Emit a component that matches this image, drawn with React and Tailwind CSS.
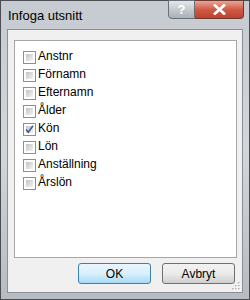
const items = [
  { label: 'Anstnr', checked: false },
  { label: 'Förnamn', checked: false },
  { label: 'Efternamn', checked: false },
  { label: 'Ålder', checked: false },
  { label: 'Kön', checked: true },
  { label: 'Lön', checked: false },
  { label: 'Anställning', checked: false },
  { label: 'Årslön', checked: false },
]

function CheckBox({ checked }) {
  return (
    <div className="w-[13px] h-[13px] border border-[#8e8f8f] bg-white p-[2px] shrink-0">
      <div className="w-full h-full bg-gradient-to-br from-[#bfc3c8] to-[#f4f4f4] relative">
        {checked && (
          <svg className="absolute -left-[2px] -top-[2px]" width="11" height="11" viewBox="0 0 11 11">
            <path d="M2 5.5 L4.3 8.2 L9 1.8" fill="none" stroke="#3b5a94" strokeWidth="1.6" />
          </svg>
        )}
      </div>
    </div>
  )
}

export default function App() {
  return (
    <div
      className="w-[250px] h-[300px] border border-[#4a4d52] bg-gradient-to-b from-[#c6cbd1] via-[#d3d6d9] to-[#b7bcc2] flex flex-col text-[12px] text-black"
      style={{ fontFamily: '"Liberation Sans", Arial, sans-serif' }}
    >
      <div className="h-[28px] flex items-start justify-between pl-[7px] pr-[5px] shrink-0">
        <div className="pt-[7px] text-[13px] leading-[16px]">Infoga utsnitt</div>
        <div className="flex h-[19px] -mt-px">
          <div className="w-[27px] h-full border border-[#6b7076] rounded-bl-[4px] bg-gradient-to-b from-[#e4e7ea] via-[#c5cacf] to-[#a9b0b8] flex items-center justify-center text-white font-bold text-[13px] leading-none">
            ?
          </div>
          <div className="w-[49px] h-full border border-l-0 border-[#6b3b33] rounded-br-[4px] bg-gradient-to-b from-[#e8a595] via-[#cf5b45] to-[#c0402b] flex items-center justify-center">
            <svg width="13" height="11" viewBox="0 0 13 11">
              <path d="M2 1.5 L11 9.5 M11 1.5 L2 9.5" stroke="white" strokeWidth="2.8" strokeLinecap="square" />
            </svg>
          </div>
        </div>
      </div>
      <div className="flex-1 mx-[6px] mb-[6px] border border-[#8a9096] bg-[#f0f0f0] flex flex-col relative">
        <div className="ml-[6px] mr-[5px] mt-[10px] h-[218px] border border-[#a6a6a6] bg-white pt-[10px] pl-[8px] flex flex-col">
          {items.map((it) => (
            <div key={it.label} className="h-[18px] flex items-start gap-[2px]">
              <CheckBox checked={it.checked} />
              <span className="leading-[13px] -mt-px">{it.label}</span>
            </div>
          ))}
        </div>
        <div className="flex justify-end gap-[11px] pr-[7px] mt-[5px]">
          <button className="w-[73px] h-[21px] rounded-[3px] border border-[#3c7fb1] bg-gradient-to-b from-[#eaf6fd] via-[#d9f0fc] to-[#a7d9f5] text-[12px] leading-none">
            OK
          </button>
          <button className="w-[73px] h-[21px] rounded-[3px] border border-[#707070] bg-gradient-to-b from-[#f2f2f2] via-[#ebebeb] to-[#cfcfcf] text-[12px] leading-none">
            Avbryt
          </button>
        </div>
        <svg className="absolute right-[1px] bottom-[1px]" width="10" height="10" viewBox="0 0 10 10">
          {[[7, 1], [4, 4], [7, 4], [1, 7], [4, 7], [7, 7]].map(([x, y]) => (
            <g key={`${x}-${y}`}>
              <rect x={x + 1} y={y + 1} width="1.5" height="1.5" fill="#fff" />
              <rect x={x} y={y} width="1.5" height="1.5" fill="#b3b3b3" />
            </g>
          ))}
        </svg>
      </div>
    </div>
  )
}
